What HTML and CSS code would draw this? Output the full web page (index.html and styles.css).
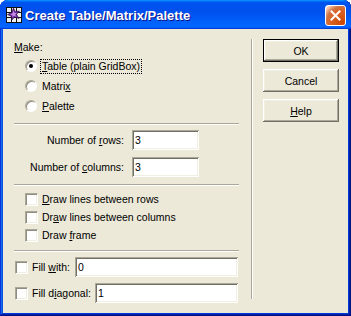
FILE: index.html
```html
<!DOCTYPE html>
<html lang="en">
<head>
  <meta charset="UTF-8" />
  <title>Create Table/Matrix/Palette</title>
  <link rel="stylesheet" href="styles.css">
</head>
<body>
  <div class="window">
    <div class="titlebar">
      <svg class="app-icon" width="16" height="16" viewBox="0 0 16 16">
        <rect x="0" y="0" width="16" height="16" fill="#f0f0f0" />
        <path d="M0.5 0V16M5.5 0V16M10.5 0V16M15.5 0V16M0 0.5H16M0 5.5H16M0 10.5H16M0 15.5H16" stroke="#111" stroke-width="1" />
        <path d="M7.5 1L9.3 4.6L13.5 4L10.6 7.4L13 11.5L8.6 10L5.5 13.5L5.6 9.4L1.5 7.6L5.6 5.4Z" fill="#6a2a9a" stroke="#2a0a40" stroke-width="0.6" />
        <path d="M7.6 3.6L8.6 6L10.8 6L9.2 7.8L10 9.8L7.8 8.8L6.4 10.4L6.6 8.2L4.4 7.4L6.6 6.3Z" fill="#c98be8" />
      </svg>
      <span class="title">Create Table/Matrix/Palette</span>
      <button class="close" type="button">
        <svg width="11" height="11" viewBox="0 0 11 11">
          <path d="M1.5 1.5L9.5 9.5M9.5 1.5L1.5 9.5" stroke="#fff" stroke-width="2" stroke-linecap="square" />
        </svg>
      </button>
    </div>

    <div class="client">
      <div class="options">
        <div class="caption"><u>M</u>ake:</div>
        <div class="choices">
          <label class="choice"><span class="radio checked"></span><span class="focus"><u>T</u>able (plain GridBox)</span></label>
          <label class="choice"><span class="radio"></span><span class="text">Matri<u>x</u></span></label>
          <label class="choice"><span class="radio"></span><span class="text"><u>P</u>alette</span></label>
        </div>

        <div class="sep"></div>

        <div class="sizes">
          <div class="field">
            <span class="field-label">Number of <u>r</u>ows:</span>
            <input class="edit num" value="3" />
          </div>
          <div class="field">
            <span class="field-label">Number of <u>c</u>olumns:</span>
            <input class="edit num" value="3" />
          </div>
        </div>

        <div class="sep"></div>

        <div class="checks">
          <label class="check-row"><span class="check"></span><span><u>D</u>raw lines between rows</span></label>
          <label class="check-row"><span class="check"></span><span>Dr<u>a</u>w lines between columns</span></label>
          <label class="check-row"><span class="check"></span><span>Draw <u>f</u>rame</span></label>
        </div>

        <div class="sep"></div>

        <div class="fills">
          <div class="fill">
            <span class="check"></span><span>Fill <u>w</u>ith:</span>
            <input class="edit fill-with" value="0" />
          </div>
          <div class="fill">
            <span class="check"></span><span>Fill d<u>i</u>agonal:</span>
            <input class="edit fill-diag" value="1" />
          </div>
        </div>
      </div>

      <div class="vsep"></div>

      <div class="actions">
        <button class="btn default" type="button">OK</button>
        <button class="btn" type="button">Cancel</button>
        <button class="btn" type="button"><u>H</u>elp</button>
      </div>
    </div>
  </div>
</body>
</html>
```

FILE: styles.css
```css
body { margin: 0; font-family: "Liberation Sans", Arial, sans-serif; font-size: 10.5px; color: #000; }
u { text-decoration: underline; text-underline-offset: 1px; }

.window {
  width: 351px; height: 316px; box-sizing: border-box;
  display: flex; flex-direction: column;
  background: #0842d6; border-radius: 8px 8px 0 0; overflow: hidden;
  box-shadow: inset -1px -1px #00138c, inset 1px 1px #0831d9, inset -2px -2px #001ea0,
              inset 2px 2px #166aee, inset -3px -3px #003bda, inset 3px 3px #0855dd;
}

.titlebar {
  height: 29px; box-sizing: border-box; flex: none;
  display: flex; align-items: flex-start;
  padding: 5px 5px 0 6px;
  background: linear-gradient(180deg, #0997ff, #0053ee 8%, #0050ee 40%, #06f 88%, #06f 93%, #005bff 95%, #003dd7 96%, #003dd7);
  border-radius: 7px 7px 0 0;
}
.app-icon { margin-top: 2px; flex: none; }
.title {
  margin: 3px 0 0 3px; line-height: 16px;
  font-size: 13px; font-weight: bold; color: #fff;
  text-shadow: 1px 1px #0f1089;
}
.close {
  margin-left: auto; width: 21px; height: 21px; padding: 0;
  display: flex; align-items: center; justify-content: center;
  border: 1px solid #fff; border-radius: 3px;
  background: radial-gradient(circle at 90% 90%, #cc4600 0%, #dc6527 55%, #cd7546 70%, #ffccb2 90%, #fff 100%);
}

.client {
  flex: 1; margin: 0 3px 3px; background: #ece9d8;
  display: flex; align-items: flex-start;
}

.options { width: 225px; margin: 12px 0 0 11px; }
.caption { line-height: 13px; height: 13px; }

.choices { margin-top: 2px; }
.choice { height: 20px; display: flex; align-items: center; padding-left: 11px; line-height: 13px; }
.radio {
  width: 12px; height: 12px; box-sizing: border-box; flex: none;
  border-radius: 50%; background: #fff; position: relative;
  border: 1px solid; border-color: #aca899 #fff #fff #aca899;
  box-shadow: inset 1px 1px #8f8c80;
}
.radio.checked::after {
  content: ""; position: absolute; left: 3px; top: 3px;
  width: 4px; height: 4px; border-radius: 50%; background: #000;
}
.focus { margin-left: 4px; padding: 0 1px; outline: 1px dotted #000; outline-offset: 0; }
.choice .text { margin-left: 5px; }

.sep { height: 0; border-top: 1px solid #aca899; border-bottom: 1px solid #fff; margin-top: 7px; }

.sizes { margin-top: 5px; }
.field { height: 20px; display: flex; align-items: center; }
.field + .field { margin-top: 7px; }
.field-label { width: 110px; margin-right: 8px; text-align: right; }

.edit {
  height: 20px; box-sizing: border-box; padding: 0 3px; margin: 0;
  border: 0; background: #fff; font: inherit; color: #000; outline: none;
  box-shadow: inset 1px 1px #aca899, inset -1px -1px #fff, inset 2px 2px #716f64, inset -2px -2px #f1efe2;
}
.num { width: 67px; }
.fill-with { width: 163px; }
.fill-diag { width: 143px; }

.sep + .checks { margin-top: 4px; }
.check-row { height: 18px; display: flex; align-items: center; gap: 4px; padding-left: 11px; }
.check {
  width: 13px; height: 13px; box-sizing: border-box; flex: none; background: #fff;
  border: 1px solid; border-color: #aca899 #fff #fff #aca899;
  box-shadow: inset 1px 1px #8f8c80, inset -1px -1px #f1efe2;
}
.checks + .sep { margin-top: 6px; }

.fills { margin-top: 5px; }
.fill { height: 20px; display: flex; align-items: center; gap: 4px; padding-left: 1px; padding-right: 1px; }
.fill + .fill { margin-top: 6px; }
.fill .edit { margin-left: auto; }

.vsep { width: 0; height: 260px; margin: 10px 0 0 12px; border-left: 1px solid #aca899; border-right: 1px solid #fff; }

.actions { margin: 10px 0 0 10px; display: flex; flex-direction: column; gap: 7px; }
.btn {
  width: 76px; height: 23px; padding: 0; margin: 0;
  font: inherit; font-weight: normal; color: #000; background: #ece9d8; border: 0;
  box-shadow: inset -1px -1px #716f64, inset 1px 1px #fff, inset -2px -2px #aca899, inset 2px 2px #f1efe2;
}
.btn.default { border: 1px solid #000; }
```
